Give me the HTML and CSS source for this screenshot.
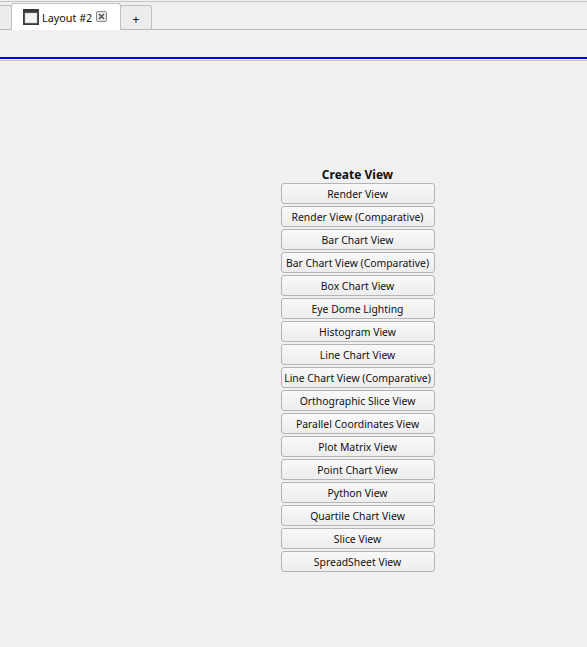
FILE: index.html
```html
<!DOCTYPE html>
<html lang="en">
<head>
<meta charset="utf-8">
<title>Layout #2</title>
<link rel="stylesheet" href="styles.css">
</head>
<body>
<div class="tabbar">
  <div class="tab tab-stub"></div>
  <div class="tab tab-active">
    <svg class="tab-icon" width="16" height="16" viewBox="0 0 16 16"><rect x="0" y="0" width="16" height="16" fill="#3a3a3a"/><rect x="2" y="4" width="12" height="10" fill="#f4f4f4" stroke="#bbb" stroke-width="0.5"/></svg>
    <span class="tab-label">Layout #2</span>
    <svg class="tab-close" width="11" height="11" viewBox="0 0 11 11"><rect x="0.5" y="0.5" width="10" height="10" rx="1.5" fill="#e8e8e8" stroke="#888"/><path d="M3 3l5 5M8 3l-5 5" stroke="#555" stroke-width="1.6"/></svg>
  </div>
  <div class="tab tab-plus">+</div>
</div>
<div class="toolbar"></div>
<div class="rule-blue"></div>
<div class="rule-gray"></div>
<main class="content">
  <section class="create">
    <h1 class="create-title">Create View</h1>
    <button class="view-btn">Render View</button>
    <button class="view-btn">Render View (Comparative)</button>
    <button class="view-btn">Bar Chart View</button>
    <button class="view-btn">Bar Chart View (Comparative)</button>
    <button class="view-btn">Box Chart View</button>
    <button class="view-btn">Eye Dome Lighting</button>
    <button class="view-btn">Histogram View</button>
    <button class="view-btn">Line Chart View</button>
    <button class="view-btn">Line Chart View (Comparative)</button>
    <button class="view-btn">Orthographic Slice View</button>
    <button class="view-btn">Parallel Coordinates View</button>
    <button class="view-btn">Plot Matrix View</button>
    <button class="view-btn">Point Chart View</button>
    <button class="view-btn">Python View</button>
    <button class="view-btn">Quartile Chart View</button>
    <button class="view-btn">Slice View</button>
    <button class="view-btn">SpreadSheet View</button>
  </section>
</main>
</body>
</html>
```
FILE: styles.css
```css
html, body {
  margin: 0;
  height: 100%;
}
body {
  box-sizing: border-box;
  padding-top: 1px;
  background: #f0f0f0;
  font-family: "Noto Sans", sans-serif;
  font-size: 10.4px;
  color: #111;
  display: flex;
  flex-direction: column;
  overflow: hidden;
}
.tabbar {
  display: flex;
  align-items: flex-end;
  height: 27px;
  flex: none;
  border-top: 1px solid #c4c4c4;
  border-bottom: 1px solid #b9b9b9;
}
.tab {
  box-sizing: border-box;
  height: 24px;
  background: #ececec;
  border: 1px solid #c0c0c0;
  border-bottom: none;
  border-radius: 3px 3px 0 0;
  margin-left: -1px;
}
.tab-stub {
  width: 12px;
  border-left: none;
  margin-left: 0;
  border-radius: 0 3px 0 0;
}
.tab-active {
  width: 110px;
  height: 27px;
  margin-bottom: -1px;
  background: #fff;
  display: flex;
  align-items: center;
  padding: 0 0 1px 11px;
}
.tab-icon {
  margin-right: 3px;
  flex: none;
}
.tab-label {
  width: 54px;
  padding-top: 2px;
  font-size: 10.8px;
}
.tab-close { flex: none; }
.tab-plus {
  width: 32px;
  font-size: 12px;
  line-height: 27px;
  text-align: center;
  color: #111;
}
.toolbar {
  height: 27px;
  flex: none;
}
.rule-blue {
  height: 2px;
  flex: none;
  background: #0000f0;
}
.rule-gray {
  height: 1px;
  flex: none;
  margin-top: 1px;
  background: #c8c8c8;
}
.content {
  flex: 1;
  padding: 106px 0 0 281px;
}
.create {
  width: 154px;
  display: flex;
  flex-direction: column;
  align-items: stretch;
  gap: 2px;
}
.create-title {
  margin: 0 0 -2px;
  padding-right: 1px;
  font-size: 12px;
  font-weight: bold;
  line-height: 16px;
  text-align: center;
}
.view-btn {
  height: 21px;
  padding: 0 1px 0 0;
  font: inherit;
  color: #111;
  white-space: nowrap;
  background: linear-gradient(#f8f8f8, #ededed);
  border: 1px solid #b4b4b4;
  border-radius: 3px;
}
```
